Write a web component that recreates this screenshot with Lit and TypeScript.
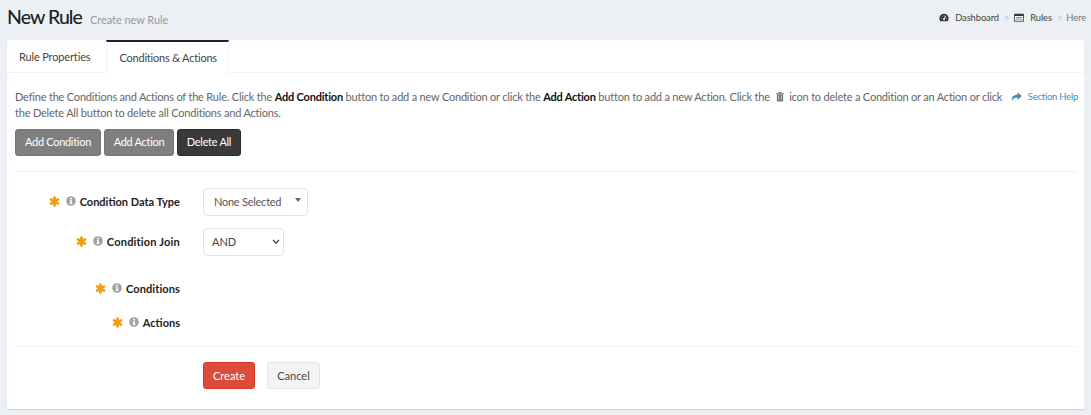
import { LitElement, html, css } from "lit";
import { customElement } from "lit/decorators.js";

const star = html`<svg class="star" viewBox="0 0 12 12"><path d="M6 0.5v11M1.200 3.200l9.600 5.600M10.800 3.200l-9.600 5.600" stroke="#f39c12" stroke-width="3" fill="none"/></svg>`;
const info = html`<svg class="info" viewBox="0 0 12 12"><circle cx="6" cy="6" r="5.800" fill="#a3a3a3"/><rect x="4.900" y="2.200" width="2.200" height="1.900" fill="#fff"/><path d="M4.300 5h2.800v3.600h.8v1H4.300v-1h.8V6h-.8z" fill="#fff"/></svg>`;

@customElement("app-root")
export class AppRoot extends LitElement {
  static styles = css`
    :host { display: block; width: 1091px; height: 415px; overflow: hidden; background: #ecf0f5; font-family: "Lato", "Noto Sans", sans-serif; font-size: 11px; color: #333; }
    .top { display: flex; justify-content: space-between; align-items: center; height: 40px; padding: 0 5px 6px 7px; box-sizing: border-box; }
    .title { display: flex; align-items: baseline; gap: 8px; }
    h1 { margin: 0; font-size: 19.500px; font-weight: 500; color: #222; line-height: 24px; letter-spacing: -0.95px; }
    .sub { font-size: 11px; color: #999; letter-spacing: -0.05px; }
    .crumbs { display: flex; align-items: center; font-size: 9.400px; color: #444; letter-spacing: -0.1px; }
    .crumbs svg { width: 10px; height: 11px; margin-right: 6px; }
    .crumbs svg.tbl { margin-left: 1px; }
    .crumbs .sep { color: #bbb; margin: 0 4px 0 5px; }
    .crumbs .here { color: #777; }
    .card { margin: 0 7px; background: #fff; border-radius: 2px; height: 369px; box-shadow: 0 1px 1px rgba(0,0,0,.12); }
    .tabs { display: flex; height: 33px; border-bottom: 1px solid #f4f4f4; box-sizing: border-box; }
    .tab { padding: 0 12px; display: flex; align-items: center; font-size: 11px; color: #444; letter-spacing: -0.15px; }
    .tab.active { margin-left: 4px; padding-right: 11px; letter-spacing: -0.2px; box-sizing: border-box; height: 33px; border-top: 2px solid #222; border-left: 1px solid #f4f4f4; border-right: 1px solid #f4f4f4; background: #fff; }
    .body { padding: 16px 8px 0; }
    .desc { display: flex; gap: 8px; align-items: flex-start; color: #666; line-height: 16px; font-size: 11px; letter-spacing: -0.2px; }
    .desc p { margin: 0; flex: 1; }
    .desc b { color: #111; }
    .trash { width: 8px; height: 10px; vertical-align: -1px; margin: 0 3px; }
    .help { display: flex; align-items: center; gap: 6px; color: #3c8dbc; font-size: 9.500px; margin-right: -2px; white-space: nowrap; letter-spacing: -0.25px; }
    .help svg { width: 11px; height: 10px; }
    .btns { display: flex; gap: 3px; margin-top: 8px; }
    button { font: inherit; font-size: 11px; height: 27px; padding: 0; border-radius: 3px; border: 1px solid #777; background: #7f7f7f; color: #fff; letter-spacing: -0.3px; }
    .btns button { padding-bottom: 2px; }
    .w86 { width: 86px; }
    .w70 { width: 70px; }
    .w64 { width: 64px; }
    button.dark { background: #3a3a3c; border-color: #2a2a2a; }
    hr { border: 0; border-top: 1px solid #f1f1f1; margin: 15px 0 0; }
    .row { display: flex; align-items: center; }
    .label { width: 165px; display: flex; justify-content: flex-end; align-items: center; font-weight: 700; color: #222; font-size: 11px; }
    .r1 .label, .r2 .label { padding-bottom: 2px; }
    .r2 .label { letter-spacing: .2px; }
    .r3 .label { letter-spacing: .1px; }
    .star { width: 11px; height: 11px; margin-right: 6px; }
    .info { width: 10px; height: 10px; margin-right: 4px; }
    .ctl { margin-left: 23px; letter-spacing: 0; }
    .r1 { margin-top: 16px; height: 28px; }
    .r2 { margin-top: 12px; height: 28px; }
    .r3 { margin-top: 22px; height: 20px; }
    .r4 { margin-top: 14px; height: 20px; }
    .r1 .sel, .r2 .sel { padding-bottom: 1px; }
    .r1 .sel { letter-spacing: -0.25px; }
    .sel { box-sizing: border-box; height: 28px; border: 1px solid #e3e3e3; border-radius: 4px; display: flex; align-items: center; color: #555; font-size: 11px; background: #fff; }
    .s1 { width: 105px; padding-left: 10px; position: relative; }
    .s1::after { content: ""; position: absolute; right: 6px; top: 9px; border: 3px solid transparent; border-top: 4px solid #666; }
    .s2 { width: 81px; padding: 0 3px 0 8px; justify-content: space-between; color: #444; }
    .s2 svg { width: 8px; height: 6px; }
    .hr2 { margin-top: 14px; }
    .foot { display: flex; margin: 15px 0 0 188px; gap: 12px; }
    .create { background: #dd4b39; border-color: #d73925; width: 52px; letter-spacing: 0; }
    .cancel { background: #f4f4f4; border-color: #e4e4e4; color: #444; width: 53px; letter-spacing: 0; }
  `;
  render() {
    const row = (cls: string, t: string, ctl: unknown = null) => html`<div class="row ${cls}"><div class="label">${star}${info}${t}</div>${ctl ? html`<div class="ctl">${ctl}</div>` : null}</div>`;
    return html`
      <div class="top">
        <div class="title"><h1>New Rule</h1><span class="sub">Create new Rule</span></div>
        <div class="crumbs">
          <svg viewBox="0 0 12 12"><path d="M6 1.500A5.500 5.500 0 0 0 .5 7c0 1.500.5 2.600 1.200 3.500h8.600c.7-.9 1.200-2 1.200-3.500A5.500 5.500 0 0 0 6 1.500z" fill="#333"/><path d="M6 8L8 4" stroke="#fff" stroke-width="1.200"/><circle cx="6" cy="8.200" r="1.200" fill="#fff"/><path d="M2.500 7h1M8.500 7h1M3.600 4.500l.7.7M6 3v1" stroke="#fff" stroke-width=".9"/></svg>Dashboard<span class="sep">&gt;</span>
          <svg class="tbl" viewBox="0 0 12 12"><path d="M.5 2h11v8.500h-11z" fill="#fff" stroke="#333"/><path d="M.5 2h11v2.200h-11z" fill="#333"/><path d="M2 6h8M2 8h8" stroke="#777"/></svg>Rules<span class="sep">&gt;</span><span class="here">Here</span>
        </div>
      </div>
      <div class="card">
        <div class="tabs"><div class="tab">Rule Properties</div><div class="tab active">Conditions &amp; Actions</div></div>
        <div class="body">
          <div class="desc">
            <p>Define the Conditions and Actions of the Rule. Click the <b>Add Condition</b> button to add a new Condition or click the <b>Add Action</b> button to add a new Action. Click the <svg class="trash" viewBox="0 0 9 11"><path d="M1 2.500h7v8H1z" fill="#777"/><path d="M0 1.700h9M3 1.500V.5h3v1" stroke="#777" fill="none"/><path d="M3 4v5M6 4v5" stroke="#ccc"/></svg> icon to delete a Condition or an Action or click the Delete All button to delete all Conditions and Actions.</p>
            <div class="help"><svg viewBox="0 0 12 10"><path d="M7 0l5 4-5 4V5.500C4 5.500 2 6.500 1 9.500.3 5 3 2.600 7 2.500z" fill="#3c8dbc"/></svg>Section Help</div>
          </div>
          <div class="btns"><button class="w86">Add Condition</button><button class="w70">Add Action</button><button class="w64 dark">Delete All</button></div>
          <hr />
          ${row("r1", "Condition Data Type", html`<div class="sel s1">None Selected</div>`)}
          ${row("r2", "Condition Join", html`<div class="sel s2">AND<svg viewBox="0 0 8 6"><path d="M1 1l3 3 3-3" stroke="#444" stroke-width="1.300" fill="none"/></svg></div>`)}
          ${row("r3", "Conditions")}
          ${row("r4", "Actions")}
          <hr class="hr2" />
          <div class="foot"><button class="create">Create</button><button class="cancel">Cancel</button></div>
        </div>
      </div>`;
  }
}
